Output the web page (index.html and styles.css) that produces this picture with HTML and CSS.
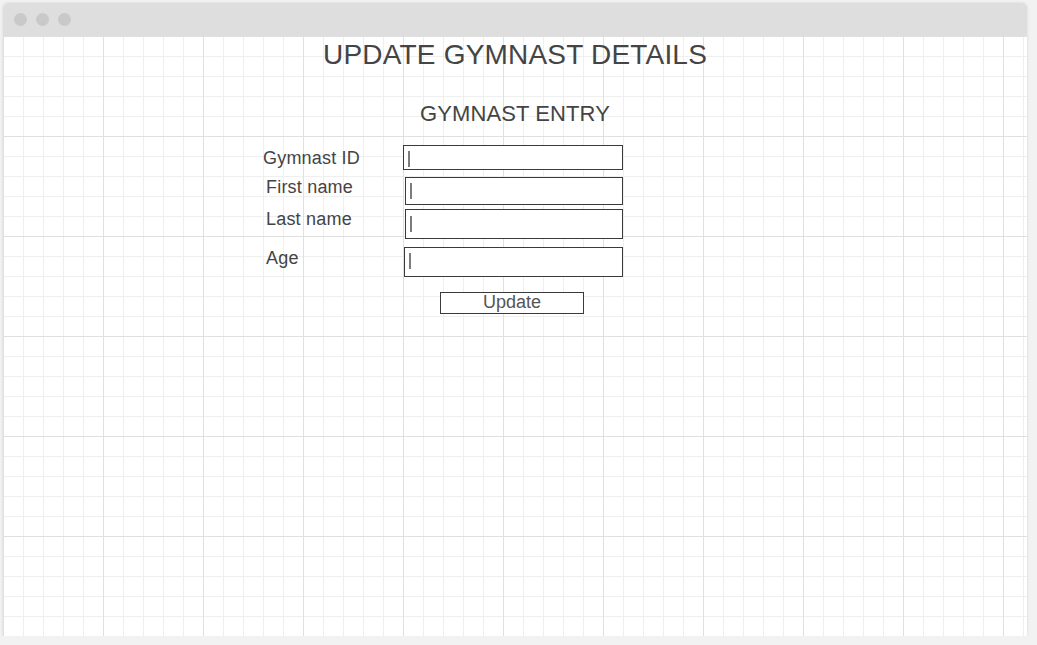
FILE: index.html
```html
<!DOCTYPE html>
<html lang="en">
<head>
<meta charset="utf-8">
<title>Update Gymnast Details</title>
<link rel="stylesheet" href="styles.css">
</head>
<body>
<div class="window">
  <div class="titlebar">
    <span class="dot"></span>
    <span class="dot"></span>
    <span class="dot"></span>
  </div>
  <div class="canvas">
    <h1 class="title">UPDATE GYMNAST DETAILS</h1>
    <h2 class="subtitle">GYMNAST ENTRY</h2>
    <form class="form">
      <div class="row row--id">
        <label class="label">Gymnast ID</label>
        <div class="field"><span class="caret"></span></div>
      </div>
      <div class="row row--first">
        <label class="label">First name</label>
        <div class="field"><span class="caret"></span></div>
      </div>
      <div class="row row--last">
        <label class="label">Last name</label>
        <div class="field"><span class="caret"></span></div>
      </div>
      <div class="row row--age">
        <label class="label">Age</label>
        <div class="field"><span class="caret"></span></div>
      </div>
      <div class="actions">
        <button type="button" class="button">Update</button>
      </div>
    </form>
  </div>
</div>
</body>
</html>
```

FILE: styles.css
```css
* { box-sizing: border-box; }

body {
  margin: 0;
  background: #f2f2f2;
  font-family: "Liberation Sans", Arial, sans-serif;
  color: #444;
}

.window {
  margin: 3px 0 0 3px;
  width: 1024px;
  height: 633px;
  display: flex;
  flex-direction: column;
  border-radius: 5px 5px 0 0;
  overflow: hidden;
  box-shadow: 0 0 3px rgba(0, 0, 0, 0.12);
}

.titlebar {
  height: 33px;
  flex: none;
  background: #dedede;
  display: flex;
  align-items: center;
  gap: 9px;
  padding-left: 11px;
}

.dot {
  width: 13px;
  height: 13px;
  border-radius: 50%;
  background: #c9c9c9;
}

.canvas {
  flex: 1;
  background-color: #fff;
  background-image:
    linear-gradient(to right, #e0e0e0 1px, transparent 1px),
    linear-gradient(to bottom, #e0e0e0 1px, transparent 1px),
    linear-gradient(to right, #efefef 1px, transparent 1px),
    linear-gradient(to bottom, #efefef 1px, transparent 1px);
  background-size: 100px 100px, 100px 100px, 20px 20px, 20px 20px;
  padding-top: 3px;
}

.title {
  margin: 0;
  font-size: 28px;
  line-height: 32px;
  font-weight: normal;
  letter-spacing: 0.2px;
  text-align: center;
  color: #444;
}

.subtitle {
  margin: 30px 0 0;
  font-size: 22px;
  line-height: 26px;
  font-weight: normal;
  letter-spacing: 0.1px;
  text-align: center;
  color: #444;
}

.form {
  margin: 18px 0 0 260px;
  display: flex;
  flex-direction: column;
}

.row {
  display: flex;
  align-items: flex-start;
}

.label {
  width: 140px;
  font-size: 18px;
  line-height: 20px;
  letter-spacing: 0.2px;
  color: #444;
}

.field {
  width: 220px;
  height: 25px;
  border: 1px solid #3a3a3a;
  background: #fff;
  padding: 5px 4px;
}

.caret {
  display: block;
  width: 2px;
  height: 16px;
  background: #7d7d7d;
}

.row--id .label { margin-top: 3px; }

.row--first { margin-top: 7px; }
.row--first .label { padding-left: 3px; width: 142px; }
.row--first .field { width: 218px; height: 28px; }

.row--last { margin-top: 4px; }
.row--last .label { padding-left: 3px; width: 142px; }
.row--last .field { width: 218px; height: 30px; padding-top: 6px; }

.row--age { margin-top: 8px; }
.row--age .label { padding-left: 3px; width: 141px; margin-top: 1px; }
.row--age .field { width: 219px; height: 30px; }

.actions {
  margin: 15px 0 0 177px;
}

.button {
  width: 144px;
  height: 22px;
  padding: 0 0 2px;
  border: 1px solid #3a3a3a;
  border-radius: 0;
  background: #fff;
  font-family: "Liberation Sans", Arial, sans-serif;
  font-size: 18px;
  line-height: 18px;
  color: #555;
  cursor: pointer;
}
```
